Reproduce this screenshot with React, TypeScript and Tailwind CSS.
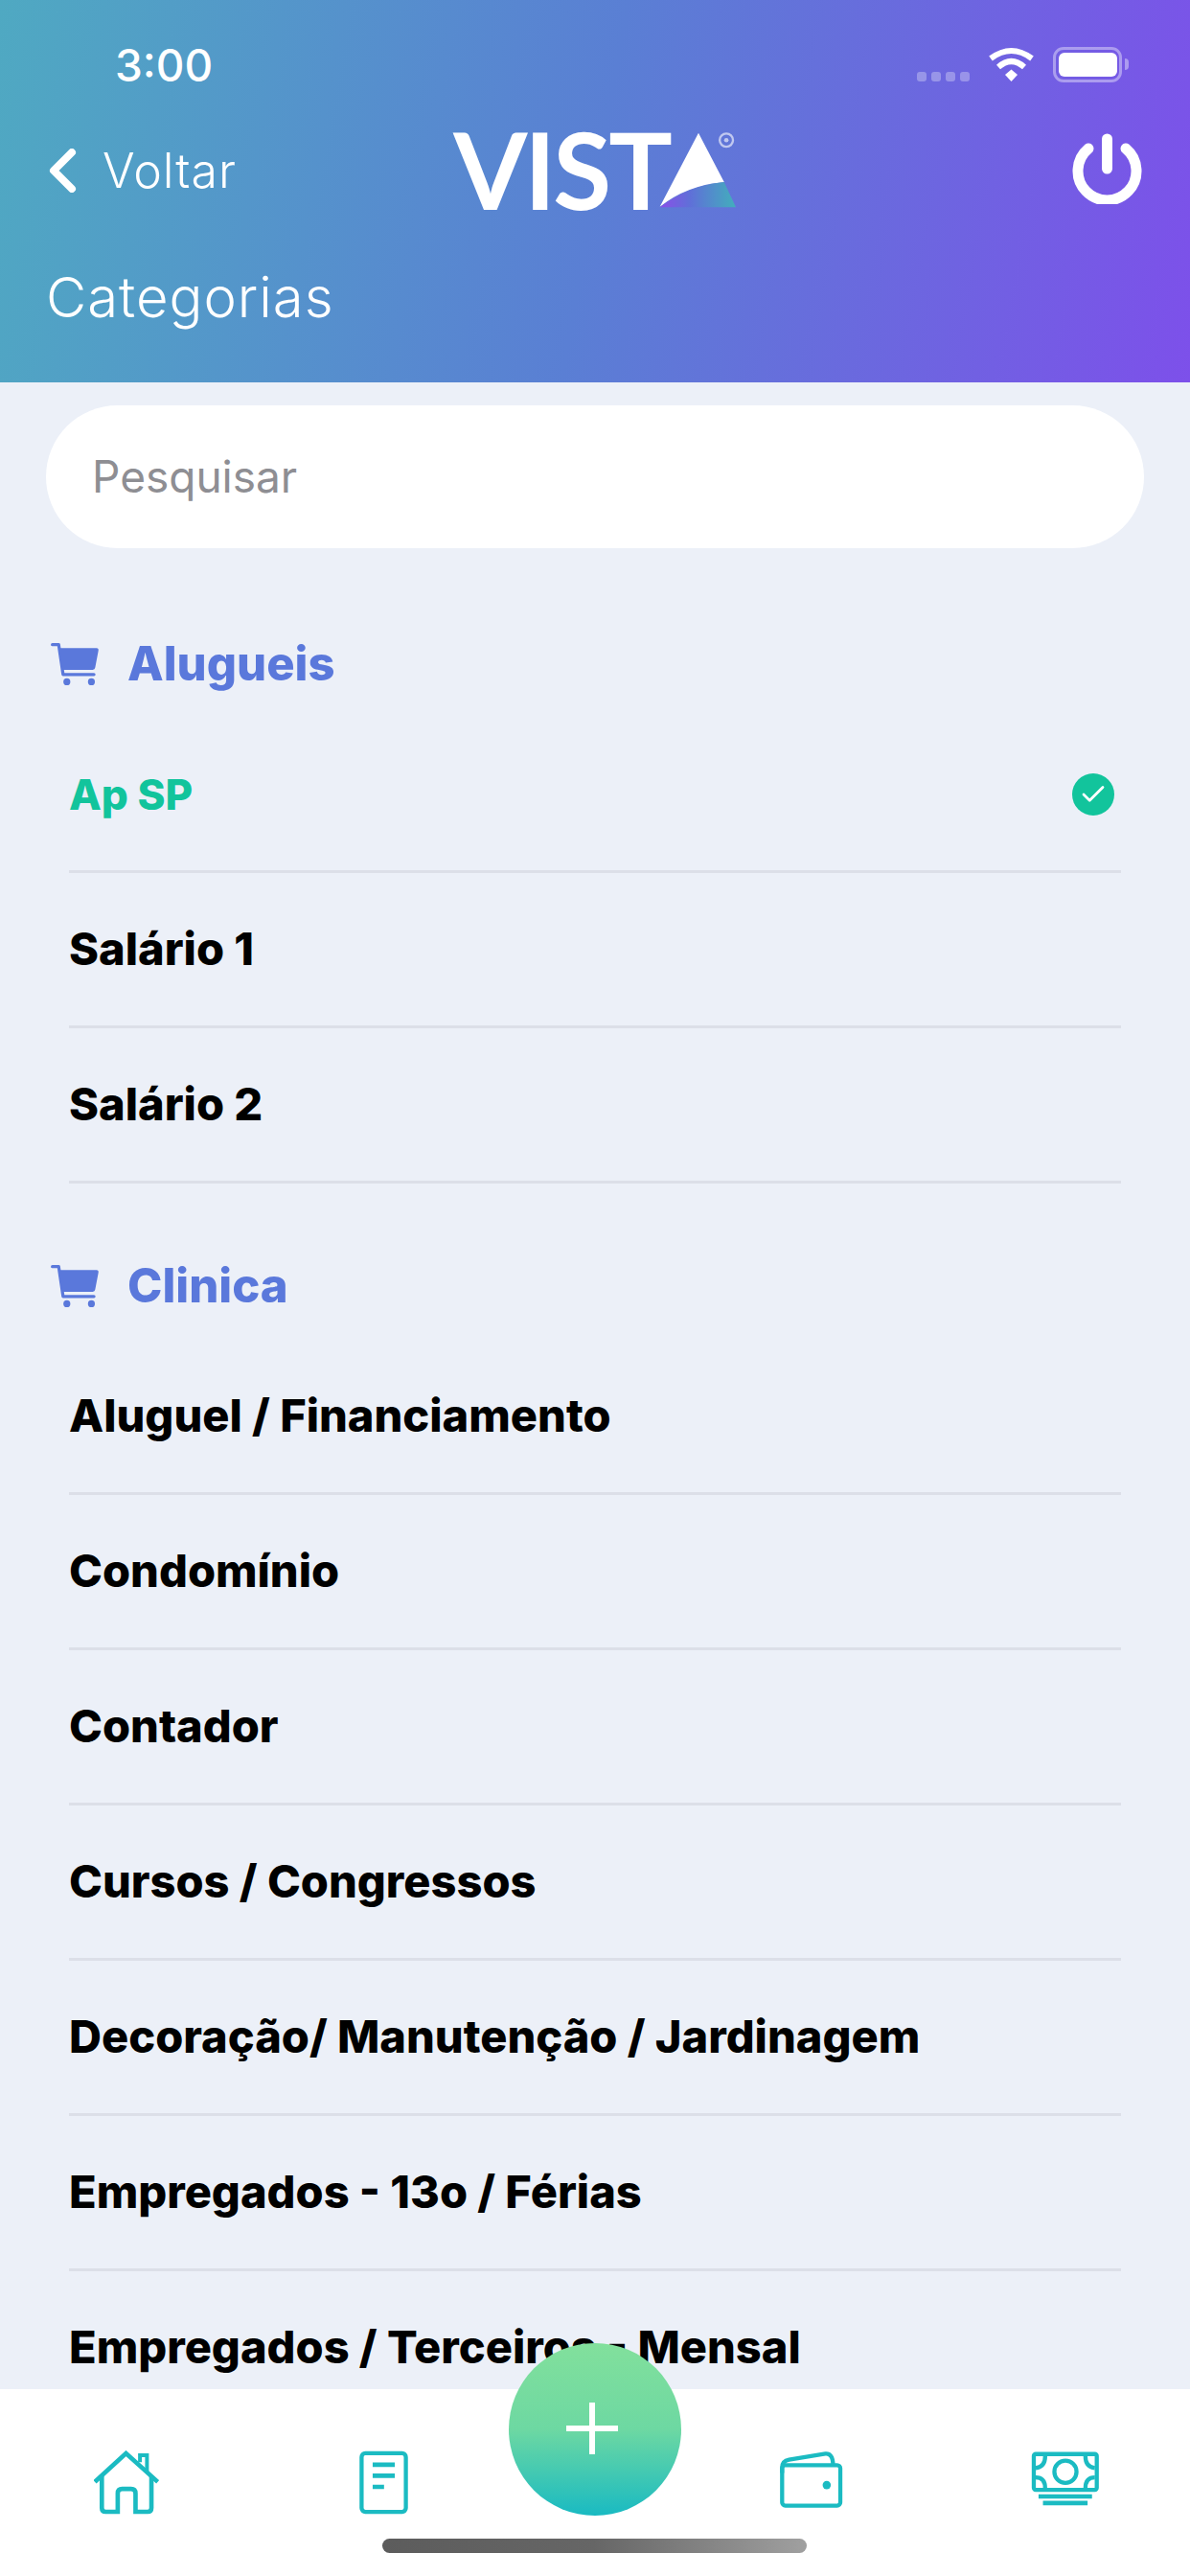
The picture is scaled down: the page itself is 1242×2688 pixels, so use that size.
import { Check } from "lucide-react"

const groups = [
  {
    title: "Alugueis",
    items: ["Ap SP", "Salário 1", "Salário 2"],
  },
  {
    title: "Clinica",
    items: [
      "Aluguel / Financiamento",
      "Condomínio",
      "Contador",
      "Cursos / Congressos",
      "Decoração/ Manutenção / Jardinagem",
      "Empregados - 13o / Férias",
      "Empregados / Terceiros - Mensal",
    ],
  },
]

const CartIcon = () => (
  <svg viewBox="62 84 158 140" className="mr-[29px] ml-[52px] h-[46px] w-[52px] shrink-0" fill="#5a78db">
    <path d="M70 92 H90 L104 187 H202" fill="none" stroke="#5a78db" strokeWidth="10" strokeLinecap="round" strokeLinejoin="round" />
    <path d="M94 103 H210 Q218 103 216 112 L206 165 Q205 172 198 172 H104 Z" />
    <circle cx="116" cy="210" r="11" />
    <circle cx="194" cy="210" r="11" />
  </svg>
)

const Logo = () => (
  <div className="-mt-[3px] flex h-[80px] items-center">
    <span className="font-['Lato'] text-[111px] leading-none font-bold tracking-[-3px] text-white blur-[0.6px]">VIST</span>
    <svg viewBox="730 85 248 242" className="-ml-[12px] h-[80px] w-[82px]">
      <defs>
        <linearGradient id="logoEdge" x1="0" x2="1" y1="0" y2="0">
          <stop offset="0" stopColor="#8a4fe8" />
          <stop offset="0.4" stopColor="#5f70d8" />
          <stop offset="1" stopColor="#42aebc" />
        </linearGradient>
      </defs>
      <path d="M857 90 L938 245 Q820 255 735 323 Z" fill="#fff" />
      <path d="M735 325 Q820 258 938 245 L975 325 Z" fill="url(#logoEdge)" />
      <circle cx="945" cy="113" r="21" fill="none" stroke="#fff" strokeOpacity="0.6" strokeWidth="7" />
      <circle cx="945" cy="113" r="7" fill="#fff" fillOpacity="0.6" />
    </svg>
  </div>
)

const StatusIcons = () => (
  <div className="flex items-start">
    <div className="mt-[26px] flex gap-[5px]">
      {[0, 1, 2, 3].map((dot) => (
        <span key={dot} className="h-[10px] w-[10px] rounded-[3px] bg-white/30" />
      ))}
    </div>
    <svg viewBox="0 0 47 36" className="ml-[20px] h-[36px] w-[47px]" fill="none" stroke="#fff" strokeWidth="6">
      <path d="M2 12 Q23.500 -4 45 12" />
      <path d="M10 21 Q23.500 9 37 21" />
      <path d="M17 29 L23.500 23.500 L30 29 L23.500 36 Z" fill="#fff" stroke="none" />
    </svg>
    <div className="ml-[20px] flex h-[37px] w-[72px] items-center justify-center rounded-[11px] border-[3px] border-white/40">
      <div className="h-[25px] w-[61px] rounded-[6px] bg-white" />
    </div>
    <span className="mt-[12px] ml-[3px] h-[12px] w-[4px] rounded-r-full bg-white/40" />
  </div>
)

const PowerIcon = () => (
  <svg viewBox="0 0 73 74" className="-mt-[4px] h-[74px] w-[73px]" fill="none" stroke="#fff" strokeLinecap="round">
    <path d="M36.500 6 V37" strokeWidth="11" />
    <path d="M17 16 A30.500 30.500 0 1 0 56 16" strokeWidth="11" />
  </svg>
)

const HomeIcon = () => (
  <svg viewBox="115 110 205 200" className="h-[67px] w-[68px]" fill="none" stroke="#1bbbc2" strokeWidth="14">
    <path d="M118 208 L216 118 L316 208" />
    <path d="M140 190 V290 Q140 302 152 302 H190 V244 Q190 230 204 230 H232 Q246 230 246 244 V302 H284 Q296 302 296 290 V190" />
    <path d="M260 146 V124 H282 V178" strokeWidth="12" />
  </svg>
)

const DocIcon = () => (
  <svg viewBox="935 108 160 203" className="h-[67px] w-[53px]" fill="none" stroke="#1bbbc2" strokeWidth="13">
    <rect x="945" y="117" width="140" height="185" rx="12" />
    <path d="M980 153 H1050 M980 188 H1050 M980 223 H1016" strokeWidth="14" />
  </svg>
)

const WalletIcon = () => (
  <svg viewBox="88 114 206 184" className="h-[61px] w-[68px]" fill="none" stroke="#1bbbc2" strokeWidth="13">
    <rect x="98" y="160" width="184" height="128" rx="10" />
    <path d="M98 185 V168 Q98 147 120 143 L235 124 Q258 122 259 158" />
    <circle cx="239" cy="223" r="13" fill="#1bbbc2" stroke="none" />
  </svg>
)

const MoneyIcon = () => (
  <svg viewBox="880 120 218 178" className="h-[59px] w-[72px]" fill="none" stroke="#1bbbc2" strokeWidth="13">
    <rect x="889" y="131" width="199" height="113" rx="6" />
    <circle cx="989" cy="187" r="35" />
    <path d="M895 175 Q925 172 925 137 M1082 175 Q1052 172 1052 137 M895 205 Q925 205 925 240 M1082 205 Q1052 205 1052 240" />
    <path d="M904 265 H1073 M918 286 H1059" strokeWidth="14" />
  </svg>
)

export default function App() {
  return (
    <div className="flex h-[2688px] w-[1242px] flex-col overflow-hidden bg-[#ecf0f8] font-['Inter',sans-serif]">
      <header className="flex h-[399px] shrink-0 flex-col bg-[linear-gradient(100deg,#4fa9c2_0%,#5a7fd4_50%,#7d50ea_100%)] text-white">
        <div className="flex h-[128px] items-start justify-between pt-[49px] pr-[64px] pl-[120px]">
          <span className="text-[46px] leading-[38px] font-medium">3:00</span>
          <StatusIcons />
        </div>
        <div className="grid h-[100px] grid-cols-[1fr_auto_1fr] items-center pr-[50px] pl-[50px]">
          <div className="flex items-center gap-[27px]">
            <svg viewBox="0 0 30 46" className="h-[46px] w-[30px]" fill="none" stroke="#fff" strokeWidth="8" strokeLinecap="round" strokeLinejoin="round">
              <path d="M25 4 L6 23 L25 42" />
            </svg>
            <span className="text-[50px] leading-none font-light tracking-[1px]">Voltar</span>
          </div>
          <Logo />
          <div className="flex justify-end">
            <PowerIcon />
          </div>
        </div>
        <h1 className="mt-[53px] pl-[48px] text-[58px] leading-none font-light tracking-[1px]">Categorias</h1>
      </header>

      <main className="min-h-0 flex-1 overflow-hidden px-[48px] pt-[24px]">
        <div className="flex h-[149px] items-center rounded-full bg-white pl-[48px] text-[46px] text-[#8e8e93]">Pesquisar</div>
        <div className="-mx-[48px] pt-[65px]">
          {groups.map((group, groupIndex) => (
            <section key={group.title} className={groupIndex > 0 ? "mt-[51px]" : ""}>
              <div className="flex h-[112px] items-center">
                <CartIcon />
                <h2 className="text-[49px] font-extrabold text-[#5a78db]">{group.title}</h2>
              </div>
              <ul className="mx-[72px]">
                {group.items.map((item, itemIndex) => {
                  const selected = item === "Ap SP"
                  return (
                    <li
                      key={itemIndex}
                      className={`flex h-[162px] items-center justify-between border-b-[3px] border-[#dcdfe8] font-extrabold ${selected ? "text-[44px] text-[#12c49c]" : "text-[47px] text-black"}`}
                    >
                      <span>{item}</span>
                      {selected && (
                        <span className="mr-[7px] flex h-[44px] w-[44px] items-center justify-center rounded-full bg-[#12c49c]">
                          <Check className="h-[30px] w-[30px] text-white" strokeWidth={2.2} />
                        </span>
                      )}
                    </li>
                  )
                })}
              </ul>
            </section>
          ))}
        </div>
      </main>

      <nav className="relative flex h-[195px] shrink-0 items-start bg-white pt-[64px]">
        <div className="ml-[98px] flex w-[276px]">
          <HomeIcon />
        </div>
        <DocIcon />
        <div className="ml-[386px]">
          <WalletIcon />
        </div>
        <div className="ml-[195px]">
          <MoneyIcon />
        </div>
        <button className="absolute top-[-48px] left-[531px] flex h-[180px] w-[180px] items-center justify-center rounded-full bg-[linear-gradient(180deg,#82e09c_0%,#6dd8a2_50%,#19bac2_100%)]">
          <svg viewBox="0 0 54 54" className="-mt-[2px] -ml-[6px] h-[54px] w-[54px]" stroke="#fff" strokeWidth="6">
            <path d="M27 0 V54 M0 27 H54" />
          </svg>
        </button>
        <div className="absolute top-[156px] left-[399px] h-[15px] w-[443px] rounded-full bg-gradient-to-r from-[#5c5c5c] via-[#666666] to-[#a0a0a0]" />
      </nav>
    </div>
  )
}
